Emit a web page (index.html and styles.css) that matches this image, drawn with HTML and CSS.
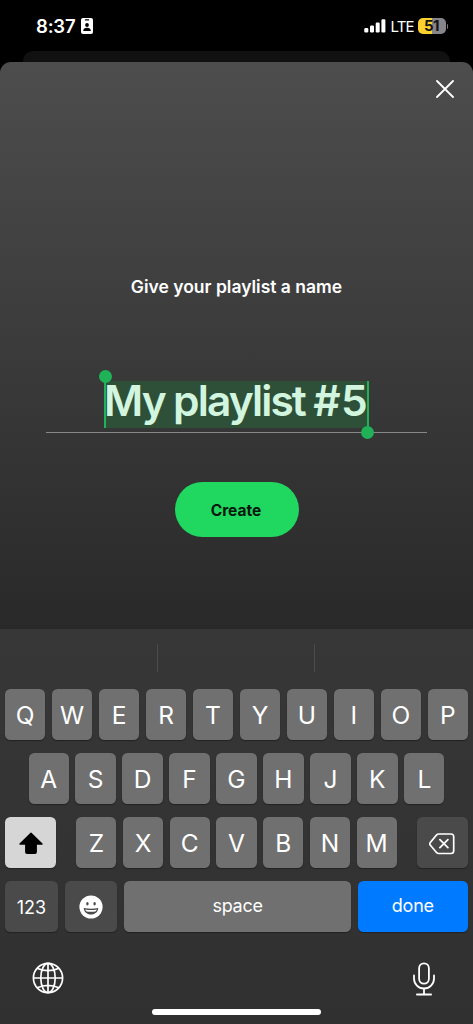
FILE: index.html
```html
<!DOCTYPE html>
<html lang="en">
<head>
<meta charset="utf-8">
<title>New playlist</title>
<link rel="stylesheet" href="styles.css">
</head>
<body>
<div class="phone">
  <header class="status">
    <div class="status-left">
      <span class="time">8:37</span>
      <svg class="badge" width="12" height="16" viewBox="0 0 12 16"><rect width="12" height="16" rx="2" fill="#fff"/><rect x="3.8" y="1.2" width="4.4" height="1.3" rx=".6" fill="#000"/><circle cx="6" cy="7" r="1.9" fill="#000"/><path d="M2.2 13c0-2.2 1.6-3.2 3.8-3.2s3.8 1 3.8 3.2z" fill="#000"/></svg>
    </div>
    <div class="status-right">
      <svg width="22" height="14" viewBox="0 0 22 14" fill="#fff"><rect x=".3" y="9" width="4" height="4.5" rx="1.2"/><rect x="6" y="6.4" width="4" height="7.1" rx="1.2"/><rect x="11.7" y="3.5" width="4" height="10" rx="1.2"/><rect x="17.4" y=".2" width="4" height="13.3" rx="1.2"/></svg>
      <span class="network">LTE</span>
      <div class="battery">51</div><i class="battery-tip"></i>
    </div>
  </header>
  <div class="behind"></div>
  <main class="sheet">
    <svg class="close" width="18" height="18" viewBox="0 0 18 18" fill="none" stroke="#fff" stroke-width="1.8" stroke-linecap="round"><path d="M1 1l16 16M17 1L1 17"/></svg>
    <h1 class="prompt">Give your playlist a name</h1>
    <div class="field"><div class="selection"><span class="name">My playlist <span class="number">#5</span></span></div></div>
    <button class="create">Create</button>
  </main>
  <section class="keyboard">
    <div class="suggestions"><i></i><i></i><i></i></div>
    <div class="row"><b class="key">Q</b><b class="key">W</b><b class="key">E</b><b class="key">R</b><b class="key">T</b><b class="key">Y</b><b class="key">U</b><b class="key">I</b><b class="key">O</b><b class="key">P</b></div>
    <div class="row"><b class="key">A</b><b class="key">S</b><b class="key">D</b><b class="key">F</b><b class="key">G</b><b class="key">H</b><b class="key">J</b><b class="key">K</b><b class="key">L</b></div>
    <div class="row">
      <b class="key shift"><svg width="26" height="22" viewBox="0 0 26 22"><path d="M13 1.200L24 12H18.200v8a1.200 1.200 0 0 1-1.200 1.200H9A1.200 1.200 0 0 1 7.800 20v-8H2z" fill="#000" stroke="#000" stroke-width="1.400" stroke-linejoin="round"/></svg></b>
      <b class="key">Z</b><b class="key">X</b><b class="key">C</b><b class="key">V</b><b class="key">B</b><b class="key">N</b><b class="key">M</b>
      <b class="key delete"><svg width="26" height="22" viewBox="0 0 26 22" fill="none" stroke="#fff" stroke-width="1.700" stroke-linecap="round" stroke-linejoin="round"><path d="M9.500 1H22a2.700 2.700 0 0 1 2.700 2.700v14.100a2.700 2.700 0 0 1-2.700 2.700H9.500q-1 0-1.800-.8L1.400 12.200q-1.200-1.400 0-2.800L7.700 1.800q.8-.8 1.800-.8zM10.900 6.700l8 8M18.900 6.700l-8 8"/></svg></b>
    </div>
    <div class="row">
      <b class="key dark numbers">123</b>
      <b class="key dark emoji"><svg width="24" height="24" viewBox="0 0 24 24"><circle cx="12" cy="12" r="11.600" fill="#fff"/><ellipse cx="8.400" cy="8.700" rx="1.200" ry="1.700" fill="#4a4a4a"/><ellipse cx="15.600" cy="8.700" rx="1.200" ry="1.700" fill="#4a4a4a"/><path d="M4.700 13q7.300 1.600 14.600 0c-.3 4.200-3.400 6.500-7.300 6.500S5 17.200 4.700 13z" fill="#4a4a4a"/><path d="M6.200 14.400q5.800 1.300 11.600 0c-.3 1-.8 1.500-1.400 2q-4.400.7-8.800 0c-.6-.5-1.100-1-1.400-2z" fill="#fff"/></svg></b>
      <b class="key space">space</b>
      <b class="key done">done</b>
    </div>
    <div class="tools">
      <svg width="32" height="32" viewBox="0 0 32 32" fill="none" stroke="#fff" stroke-width="1.700"><circle cx="16" cy="16" r="14.600"/><ellipse cx="16" cy="16" rx="7.200" ry="14.600"/><path d="M16 1.400v29.200M1.400 16h29.200M5 6.200q11 5 22 0M5 25.800q11-5 22 0"/></svg>
      <svg width="24" height="34" viewBox="0 0 24 34" fill="none" stroke="#fff" stroke-width="1.800" stroke-linecap="round"><rect x="7.100" y="1.300" width="9.800" height="20.400" rx="4.900"/><path d="M2 13.500v3a10 10 0 0 0 20 0v-3M12 26.600v5.600M4.900 32.500h14.200"/></svg>
    </div>
    <div class="home"></div>
  </section>
</div>
</body>
</html>
```
FILE: styles.css
```css
* { box-sizing: border-box; }
body { margin: 0; background: #000; color: #fff; font-family: Inter, "Liberation Sans", sans-serif; }
.phone { width: 473px; height: 1024px; display: flex; flex-direction: column; overflow: hidden; }
.status { height: 51px; display: flex; justify-content: space-between; padding: 0 25px 0 36px; flex: none; }
.status-left, .status-right { display: flex; align-items: center; height: 52px; }
.time { font-size: 18.5px; font-weight: 600; letter-spacing: -.2px; }
.badge { margin-left: 6px; }
.network { font-size: 15px; margin-left: 5px; letter-spacing: -.8px; width: 21px; }
.battery { width: 28px; height: 16px; margin-left: 6px; border-radius: 5px; background: linear-gradient(90deg, #fcd22e 51%, #85858a 51%); color: #151515; font-size: 15px; line-height: 16px; font-weight: 700; text-align: center; letter-spacing: -.5px; }
.battery-tip { width: 1.5px; height: 5px; margin-left: 1px; border-radius: 0 2px 2px 0; background: #77777a; }
.behind { height: 21px; margin: 0 23px -10px; border-radius: 10px 10px 0 0; background: #111; flex: none; }
.sheet { height: 567px; flex: none; display: flex; flex-direction: column; align-items: center; border-radius: 11px 11px 0 0; background: linear-gradient(#4d4d4d, #292929); padding-top: 18px; position: relative; }
.close { align-self: flex-end; margin-right: 19px; flex: none; }
.prompt { margin: 177px 0 0; height: 24px; line-height: 24px; font-size: 17.5px; font-weight: 600; white-space: nowrap; }
.field { width: 381px; height: 52px; margin-top: 82px; border-bottom: 1px solid #888; display: flex; justify-content: center; align-items: flex-start; }
.selection { position: relative; width: 265px; height: 47px; background: #2e5039; border-left: 2px solid #1fb257; border-right: 2px solid #1fb257; white-space: nowrap; }
.selection::before, .selection::after { content: ""; position: absolute; width: 13px; height: 13px; border-radius: 50%; background: #1fb257; }
.selection::before { left: -7.500px; top: -11px; }
.selection::after { right: -6.500px; top: 45px; }
.name { display: block; color: #d2f5df; font-size: 42.500px; line-height: 39px; font-weight: 600; letter-spacing: -1.900px; word-spacing: -.5px; margin-left: -2px; }
.number { letter-spacing: .5px; }
.create { width: 124px; height: 55px; margin-top: 49px; border: 0; border-radius: 28px; background: #20d760; color: #06180c; font: 700 15.500px Inter, sans-serif; padding: 1px 1px 0 0; }
.keyboard { flex: 1; background: linear-gradient(#373737, #303030); padding: 0 5px; display: flex; flex-direction: column; }
.suggestions { height: 60px; margin: 0 -5px; padding: 15px 1px 0 0; display: flex; flex: none; }
.suggestions i { flex: 1; height: 28px; border-right: 1px solid #4b4b4b; }
.suggestions i:last-child { border: 0; }
.row { display: flex; justify-content: center; gap: 6.600px; height: 51px; margin-bottom: 13px; flex: none; }
.key { width: 40.360px; border-radius: 5.500px; background: #707070; box-shadow: 0 1px 1px #222; display: flex; align-items: center; justify-content: center; font-size: 24.500px; font-weight: 400; padding-top: 1px; }
.shift { width: 51.500px; margin-right: 13.500px; background: #d6d6d6; padding-top: 1px; }
.delete { width: 51.500px; margin-left: 13.500px; background: #4a4a4a; padding-top: 2px; }
.dark { width: 53px; background: #4a4a4a; }
.numbers, .space, .done { font-size: 18px; }
.space { width: 227.500px; padding-bottom: 3px; letter-spacing: -.3px; }
.done { width: 110.500px; background: #007aff; padding-bottom: 3px; letter-spacing: -.2px; }
.tools { display: flex; justify-content: space-between; align-items: flex-start; padding: 17px 32px 0 27px; height: 63px; flex: none; }
.home { width: 169px; height: 6px; border-radius: 3px; background: #fff; margin: 1px auto 0; flex: none; }
```
